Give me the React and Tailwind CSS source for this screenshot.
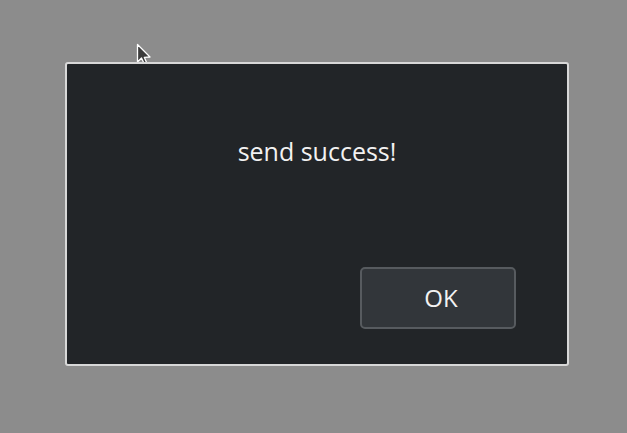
import React from 'react';

const Cursor = () => (
    <svg className="absolute left-[136px] top-[43px]" width="18" height="26" viewBox="0 0 18 26">
        <path d="M1.5 1.5 L1.5 19 L5.5 15 L8.5 21.5 L11 20.5 L8.3 14.3 L14 14 Z" fill="#3c3c3c" stroke="#ffffff" strokeWidth="1.3" strokeLinejoin="round" />
    </svg>
);

const App = () => {
    return (
        <div className="relative w-[627px] h-[433px] bg-[#8c8c8c] overflow-hidden" style={{ fontFamily: '"Open Sans", sans-serif' }}>
            <Cursor />
            <div className="relative pt-[62px] pl-[65px]">
                <div className="w-[504px] h-[304px] bg-[#222528] border-2 border-[#d8d8d8] rounded-[3px] flex flex-col">
                    <div className="pt-[71px] text-center text-[25px] leading-[32px] text-[#f2f2f2]">
                        send success!
                    </div>
                    <div className="mt-auto flex justify-end pr-[51px] pb-[35px]">
                        <button className="w-[156px] h-[62px] pl-[6px] bg-[#32363a] border-2 border-[#575b5f] rounded-[5px] text-[24px] text-[#f2f2f2]">
                            OK
                        </button>
                    </div>
                </div>
            </div>
        </div>
    );
};

export default App;
